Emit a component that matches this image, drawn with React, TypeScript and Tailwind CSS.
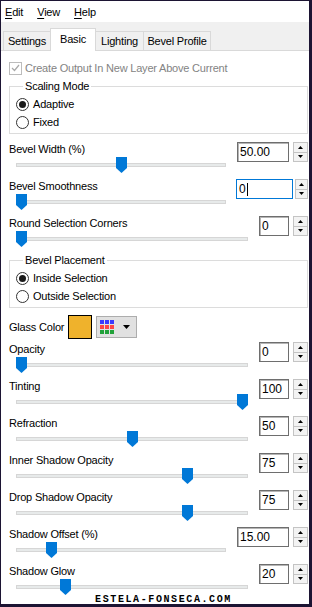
import type { ReactNode } from "react";

interface RowProps {
  label: string;
  value: string;
  frac: number;
  wide?: boolean;
  focused?: boolean;
  last?: boolean;
}

function Arrow({ up }: { up?: boolean }) {
  return (
    <svg width="5" height="3" viewBox="0 0 5 3">
      <path d={up ? "M2.5 0L5 3H0Z" : "M0 0H5L2.5 3Z"} fill="#000" />
    </svg>
  );
}

function Spinner({ narrow }: { narrow?: boolean }) {
  return (
    <div
      className={`flex h-[20px] flex-col border border-[#c4c4c4] bg-[#f3f3f3] ${
        narrow ? "w-[13px]" : "w-[15px]"
      }`}
    >
      <div className="flex flex-1 items-center justify-center border-b border-[#c4c4c4]">
        <Arrow up />
      </div>
      <div className="flex flex-1 items-center justify-center">
        <Arrow />
      </div>
    </div>
  );
}

function Slider({ frac }: { frac: number }) {
  return (
    <div className="relative ml-[7px] h-[16px]">
      <div className="absolute left-0 right-0 top-[6px] h-[4px] border border-[#d6d6d6] bg-[#e7eaea]" />
      <svg
        className="absolute top-0"
        style={{ left: `calc(${frac} * (100% - 11px))` }}
        width="11"
        height="16"
        viewBox="0 0 11 16"
      >
        <path d="M0 0H11V11L5.5 16L0 11Z" fill="#0078d7" />
      </svg>
    </div>
  );
}

function SliderRow({ label, value, frac, wide, focused, last }: RowProps) {
  return (
    <div className={`flex ${last ? "h-[33px]" : "h-[37px]"}`}>
      <div className={wide ? "w-[217px]" : "w-[239px]"}>
        <div className="h-[16px] leading-[16px]">{label}</div>
        <Slider frac={frac} />
      </div>
      <div className="flex-1" />
      <div className="mt-[1px] flex h-[20px]">
        <div
          className={`flex h-[20px] items-center border bg-white pl-[2px] text-[12px] tracking-normal ${
            focused
              ? "w-[57px] border-[#0078d7]"
              : wide
              ? "w-[52px] border-[#6e6e6e] shadow-[inset_1px_1px_0_#b5b5b5]"
              : "w-[30px] border-[#6e6e6e] shadow-[inset_1px_1px_0_#b5b5b5]"
          }`}
        >
          {value}
          {focused && <span className="ml-[1px] inline-block h-[13px] w-[1px] bg-black" />}
        </div>
        <div className={focused ? "ml-[2px]" : "ml-[4px]"}>
          <Spinner narrow={focused} />
        </div>
      </div>
    </div>
  );
}

function Radio({ checked, children }: { checked?: boolean; children: ReactNode }) {
  return (
    <div className="flex h-[18px] items-center">
      <div className="flex h-[13px] w-[13px] items-center justify-center rounded-full border border-[#333] bg-white">
        {checked && <div className="h-[7px] w-[7px] rounded-full bg-[#1a1a1a]" />}
      </div>
      <span className="ml-[4px]">{children}</span>
    </div>
  );
}

function Group({ title, children }: { title: string; children: ReactNode }) {
  return (
    <fieldset className="border border-[#dcdcdc] pb-[2px] pl-[6px] pt-[1px]">
      <legend className="ml-[7px] px-[2px] leading-[16px]">{title}</legend>
      {children}
    </fieldset>
  );
}

const topRows: RowProps[] = [
  { label: "Bevel Width (%)", value: "50.00", frac: 0.5, wide: true },
  { label: "Bevel Smoothness", value: "0", frac: 0, wide: true, focused: true },
  { label: "Round Selection Corners", value: "0", frac: 0 },
];

const bottomRows: RowProps[] = [
  { label: "Opacity", value: "0", frac: 0 },
  { label: "Tinting", value: "100", frac: 1 },
  { label: "Refraction", value: "50", frac: 0.5 },
  { label: "Inner Shadow Opacity", value: "75", frac: 0.75 },
  { label: "Drop Shadow Opacity", value: "75", frac: 0.75 },
  { label: "Shadow Offset (%)", value: "15.00", frac: 0.15, wide: true },
  { label: "Shadow Glow", value: "20", frac: 0.2, last: true },
];

const gridColors = [
  "bg-[#3b3bff]", "bg-[#3b3bff]", "bg-[#3b3bff]",
  "bg-[#ff4646]", "bg-[#ff4646]", "bg-[#ff4646]",
  "bg-[#22a23a]", "bg-[#22a23a]", "bg-[#22a23a]",
];

export default function App() {
  return (
    <div className="h-[607px] w-[312px] overflow-hidden border-b-[3px] border-l-[1px] border-r-[3px] border-t-[1px] border-[#1c1433] bg-white font-['Liberation_Sans',Arial,sans-serif] text-[11px] tracking-[-0.2px] text-black">
      {/* menu bar */}
      <div className="flex h-[21px] gap-[14px] bg-white pl-[4px] pt-[2px] leading-[19px]">
        <span>
          <u className="underline-offset-2">E</u>dit
        </span>
        <span>
          <u className="underline-offset-2">V</u>iew
        </span>
        <span>
          <u className="underline-offset-2">H</u>elp
        </span>
      </div>

      {/* tabs */}
      <div className="flex h-[29px] items-end border-b border-[#d9d9d9] bg-[#f0f0f0] pl-[2px]">
        <div className="flex h-[19px] w-[47px] items-center justify-center border-l border-t border-[#d9d9d9]">
          Settings
        </div>
        <div className="relative -mb-[1px] flex h-[23px] w-[46px] items-center justify-center border-l border-r border-t border-[#d9d9d9] bg-white pb-[1px]">
          Basic
        </div>
        <div className="flex h-[19px] w-[47px] items-center justify-center border-t border-[#d9d9d9]">
          Lighting
        </div>
        <div className="flex h-[19px] w-[68px] items-center justify-center border-l border-r border-t border-[#d9d9d9]">
          Bevel Profile
        </div>
      </div>

      {/* content */}
      <div className="pl-[8px] pr-[1px]">
        <div className="mt-[9px] flex h-[16px] items-center text-[#838383]">
          <div className="flex h-[13px] w-[13px] items-center justify-center border border-[#bcbcbc]">
            <svg width="9" height="8" viewBox="0 0 9 8">
              <path d="M1 4L3.5 6.5L8 1" stroke="#a8a8a8" strokeWidth="1.2" fill="none" />
            </svg>
          </div>
          <span className="ml-[3px]">Create Output In New Layer Above Current</span>
        </div>

        <div className="mt-[2px]">
          <Group title="Scaling Mode">
            <Radio checked>Adaptive</Radio>
            <Radio>Fixed</Radio>
          </Group>
        </div>

        <div className="mt-[7px]">
          {topRows.map((r) => (
            <SliderRow key={r.label} {...r} />
          ))}
        </div>

        <Group title="Bevel Placement">
          <Radio checked>Inside Selection</Radio>
          <Radio>Outside Selection</Radio>
        </Group>

        <div className="flex h-[33px] items-start pt-[7px]">
          <div className="flex h-[24px] w-[59px] items-center">Glass Color</div>
          <div className="h-[24px] w-[24px] border border-black bg-[#efb22c]" />
          <div className="ml-[4px] mt-[1px] flex h-[22px] w-[41px] items-center border border-[#adadad] bg-[#e1e1e1] pl-[3px]">
            <div className="grid grid-cols-3 gap-[1px]">
              {gridColors.map((c, i) => (
                <div key={i} className={`h-[4px] w-[4px] ${c}`} />
              ))}
            </div>
            <svg className="ml-[9px]" width="7" height="4" viewBox="0 0 7 4">
              <path d="M0 0H7L3.5 4Z" fill="#000" />
            </svg>
          </div>
        </div>

        {bottomRows.map((r) => (
          <SliderRow key={r.label} {...r} />
        ))}
      </div>

      <div className="flex h-[8px] justify-center pl-[17px] font-['Liberation_Mono',monospace] text-[10px] font-bold leading-[8px] tracking-[1.6px]">
        ESTELA-FONSECA.COM
      </div>
    </div>
  );
}
